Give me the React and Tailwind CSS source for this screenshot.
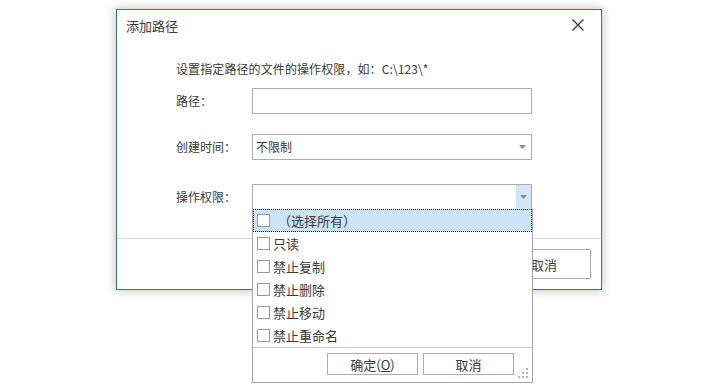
import React from "react";

const font = { fontFamily: '"Microsoft YaHei", "Noto Sans CJK SC", "Noto Sans", sans-serif' };

function Arrow() {
  return (
    <svg width="7" height="4" viewBox="0 0 7 4" className="block">
      <path d="M0 0 H7 L3.5 4 Z" fill="#8a8a8a" />
    </svg>
  );
}

function Checkbox() {
  return <span className="block w-[13px] h-[13px] border border-[#9a9a9a] bg-white shrink-0" />;
}

const options = ["只读", "禁止复制", "禁止删除", "禁止移动", "禁止重命名"];

function PermissionList() {
  return (
    <div className="absolute left-[-1px] top-full w-[281px] bg-white border border-[#a6a6a6] border-t-0 z-10 text-[#3a3a3a]">
      <div className="flex items-center h-[23px] bg-[#cce4f7] border border-dotted border-black pl-[3px]">
        <Checkbox />
        <span className="ml-[8px] text-[13px] leading-none">（选择所有）</span>
      </div>
      {options.map((o) => (
        <div key={o} className="flex items-center h-[23px] pl-[4px]">
          <Checkbox />
          <span className="ml-[3px] text-[13px] leading-none">{o}</span>
        </div>
      ))}
      <div className="border-t border-[#c8c8c8] h-[35px] relative flex items-start justify-end pr-[18px] pt-[5px] gap-[5px]">
        <button className="w-[91px] h-[22px] border border-[#adadad] bg-white text-[13px] leading-none text-[#3a3a3a]">
          确定(<span className="underline">O</span>)
        </button>
        <button className="w-[91px] h-[22px] border border-[#adadad] bg-white text-[13px] leading-none text-[#3a3a3a]">
          取消
        </button>
        <svg width="10" height="10" viewBox="0 0 10 10" className="absolute right-[4px] bottom-[4px]">
          {[[8, 0], [8, 4], [4, 4], [8, 8], [4, 8], [0, 8]].map(([x, y]) => (
            <rect key={`${x}-${y}`} x={x} y={y} width="2" height="2" fill="#b5b5b5" />
          ))}
        </svg>
      </div>
    </div>
  );
}

export default function App() {
  return (
    <div className="w-[726px] h-[392px] bg-white text-[#3a3a3a] relative" style={font}>
      <div className="pt-[9px] pl-[116px]">
        <div className="w-[486px] h-[281px] border border-[#3f6fa6] bg-white shadow-[0_0_10px_rgba(0,0,0,0.28)] flex flex-col">
          {/* Title bar */}
          <div className="h-[30px] flex items-center justify-between pl-[9px] pr-[17px]">
            <span className="text-[13px] leading-none pt-[1px]">添加路径</span>
            <svg width="12" height="12" viewBox="0 0 12 12">
              <path d="M0.5 0.5 L11.5 11.5 M11.5 0.5 L0.5 11.5" stroke="#333" strokeWidth="1.2" />
            </svg>
          </div>

          {/* Body */}
          <div className="flex-1 pl-[59px]">
            <div className="mt-[19px] h-[20px] flex items-center text-[12px] leading-none tracking-[0.1px]">
              设置指定路径的文件的操作权限，如：C:\123\*
            </div>

            <div className="mt-[9px] flex items-center h-[26px]">
              <span className="w-[76px] text-[12px] leading-none">路径：</span>
              <div className="w-[280px] h-[26px] border border-[#ababab] bg-white" />
            </div>

            <div className="mt-[20px] flex items-center h-[26px]">
              <span className="w-[76px] text-[12px] leading-none">创建时间：</span>
              <div className="w-[280px] h-[26px] border border-[#ababab] bg-white flex items-center justify-between pl-[3px] pr-[5px]">
                <span className="text-[12px] leading-none">不限制</span>
                <Arrow />
              </div>
            </div>

            <div className="mt-[24px] flex items-center h-[26px]">
              <span className="w-[76px] text-[12px] leading-none">操作权限：</span>
              <div className="relative w-[280px] h-[26px] border border-[#ababab] bg-white flex items-stretch justify-end">
                <div className="w-[15px] bg-[#d3e6f7] flex items-center justify-center">
                  <Arrow />
                </div>
                <PermissionList />
              </div>
            </div>
          </div>

          {/* Footer */}
          <div className="h-[51px] border-t border-[#dcdcdc] flex items-start justify-end gap-[8px] pt-[10px] pr-[10px]">
            <button className="w-[94px] h-[30px] border border-[#adadad] bg-white text-[13px] leading-none">确定</button>
            <button className="w-[94px] h-[30px] border border-[#adadad] bg-white text-[13px] leading-none">取消</button>
          </div>
        </div>
      </div>
    </div>
  );
}
